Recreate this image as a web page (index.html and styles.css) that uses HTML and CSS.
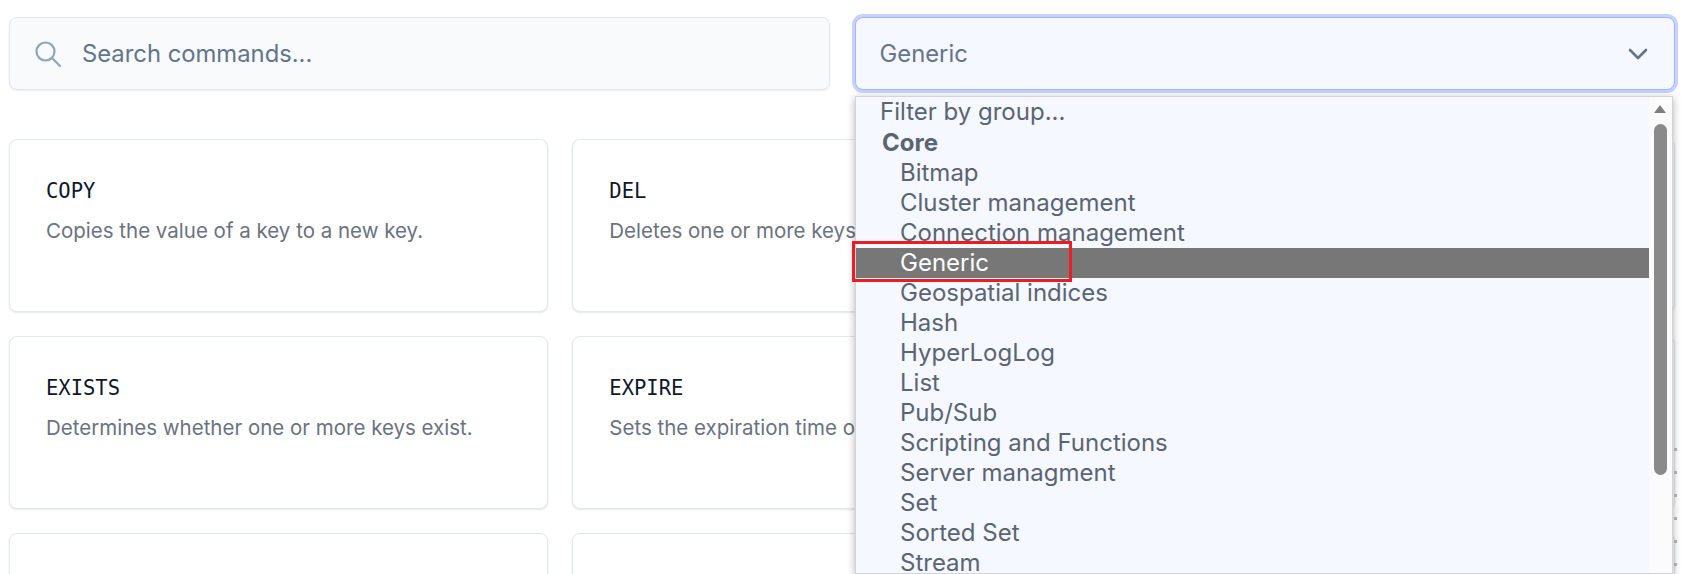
FILE: index.html
```html
<!DOCTYPE html>
<html lang="en">
<head>
    <meta charset="UTF-8">
    <meta name="viewport" content="width=device-width, initial-scale=1.0">
    <title>Commands</title>
    <link rel="stylesheet" href="styles.css">
</head>
<body>
    <div class="page">
        <div class="filters">
            <div class="search">
                <svg class="search-icon" width="26" height="26" viewBox="0 0 26 26" fill="none" stroke="currentColor" stroke-width="2.2" stroke-linecap="round">
                    <circle cx="10.5" cy="10.5" r="9"/>
                    <path d="M17 17l8 8"/>
                </svg>
                <input class="search-input" type="text" placeholder="Search commands...">
            </div>
            <div class="group-select">
                <span>Generic</span>
                <svg width="20" height="12" viewBox="0 0 20 12" fill="none" stroke="currentColor" stroke-width="2.6" stroke-linecap="round" stroke-linejoin="round">
                    <path d="M2 2l8 8 8-8"/>
                </svg>
            </div>
        </div>

        <div class="cards">
            <div class="card">
                <h3>COPY</h3>
                <p>Copies the value of a key to a new key.</p>
            </div>
            <div class="card">
                <h3>DEL</h3>
                <p>Deletes one or more keys.</p>
            </div>
            <div class="card"></div>
            <div class="card">
                <h3>EXISTS</h3>
                <p>Determines whether one or more keys exist.</p>
            </div>
            <div class="card">
                <h3>EXPIRE</h3>
                <p>Sets the expiration time of</p>
            </div>
            <div class="card"></div>
            <div class="card"></div>
            <div class="card"></div>
            <div class="card"></div>
        </div>
    </div>

    <div class="menu">
        <ul class="menu-list">
            <li class="menu-placeholder">Filter by group...</li>
            <li class="menu-group">Core</li>
            <li>Bitmap</li>
            <li>Cluster management</li>
            <li>Connection management</li>
            <li class="selected">Generic</li>
            <li>Geospatial indices</li>
            <li>Hash</li>
            <li>HyperLogLog</li>
            <li>List</li>
            <li>Pub/Sub</li>
            <li>Scripting and Functions</li>
            <li>Server managment</li>
            <li>Set</li>
            <li>Sorted Set</li>
            <li>Stream</li>
        </ul>
        <div class="menu-scroll">
            <div class="scroll-up"></div>
            <div class="scroll-thumb"></div>
        </div>
    </div>

    <div class="highlight"></div>
    <div class="edge-dots"></div>
</body>
</html>
```

FILE: styles.css
```css
* {
    box-sizing: border-box;
}
html, body {
    height: 100%;
    overflow: hidden;
}
body {
    margin: 0;
    background-color: #fff;
    font-family: Inter, "Noto Sans", sans-serif;
    color: #64748b;
}
.page {
    height: 574px;
    overflow: hidden;
    padding: 17px 12px 0 9px;
}
.filters {
    display: grid;
    grid-template-columns: 1fr 1fr;
    column-gap: 25px;
    margin-bottom: 49px;
}
.search {
    display: flex;
    align-items: center;
    gap: 21px;
    height: 73px;
    padding: 0 25px;
    background-color: #f8fafc;
    border: 1px solid #e2e8f0;
    border-radius: 8px;
    box-shadow: 0 1px 2px rgba(0, 0, 0, 0.08);
}
.search-icon {
    flex: none;
    color: #8fa3bf;
}
.search-input {
    flex: 1;
    border: none;
    outline: none;
    padding: 0;
    background: transparent;
    font-family: inherit;
    font-size: 23.8px;
}
.search-input::placeholder {
    color: #64748b;
    opacity: 1;
}
.group-select {
    display: flex;
    align-items: center;
    justify-content: space-between;
    height: 73px;
    padding: 0 26px 0 24px;
    background-color: #f5f8ff;
    border: 1px solid #a5b4fc;
    border-radius: 8px;
    box-shadow: 0 0 0 3px #c7d2fe;
    font-size: 23.8px;
}
.cards {
    display: grid;
    grid-template-columns: repeat(3, 1fr);
    gap: 24px;
}
.card {
    height: 173px;
    padding: 37px 36px;
    background-color: #fff;
    border: 1px solid #e2e8f0;
    border-radius: 8px;
    box-shadow: 0 1px 2px rgba(0, 0, 0, 0.1);
}
.card h3 {
    margin: 0 0 12px;
    font-family: "DejaVu Sans Mono", monospace;
    font-size: 20.5px;
    line-height: 28px;
    font-weight: 400;
    color: #0f172a;
}
.card p {
    margin: 0;
    font-size: 20.5px;
    line-height: 28px;
    color: #6b7280;
}

/* open dropdown */
.menu {
    position: absolute;
    left: 855px;
    top: 96px;
    width: 818px;
    height: 478px;
    overflow: hidden;
    display: flex;
    background-color: #f5f8ff;
    border: 1px solid #d4d4d8;
    box-shadow: 0 2px 8px rgba(0, 0, 0, 0.3);
}
.menu-list {
    flex: 1;
    margin: 0;
    padding: 0;
    list-style: none;
    font-size: 24px;
    line-height: 30px;
    color: #5b6472;
}
.menu-list li {
    height: 30px;
    padding-left: 44px;
    white-space: nowrap;
}
.menu-list .menu-placeholder {
    height: 31px;
    padding-left: 24px;
}
.menu-list .menu-group {
    padding-left: 26px;
    font-weight: 700;
}
.menu-list .selected {
    background-color: #777;
    color: #fff;
}
.menu-scroll {
    flex: none;
    width: 23px;
    padding: 8px 5px 0;
    background-color: #fbfbfb;
}
.scroll-up {
    width: 0;
    margin-bottom: 11px;
    border-left: 6.5px solid transparent;
    border-right: 6.5px solid transparent;
    border-bottom: 8px solid #7f7f7f;
}
.scroll-thumb {
    width: 13px;
    height: 351px;
    background-color: #8a8a8a;
    border-radius: 7px;
}

/* red annotation box */
.highlight {
    position: absolute;
    left: 852px;
    top: 241px;
    width: 220px;
    height: 41px;
    border: 3px solid #ed1c24;
}
.edge-dots {
    position: absolute;
    left: 1674px;
    top: 448px;
    width: 3px;
    height: 126px;
    background-image: repeating-linear-gradient(to bottom, #aaa 0, #aaa 3px, transparent 3px, transparent 23px);
}
```
